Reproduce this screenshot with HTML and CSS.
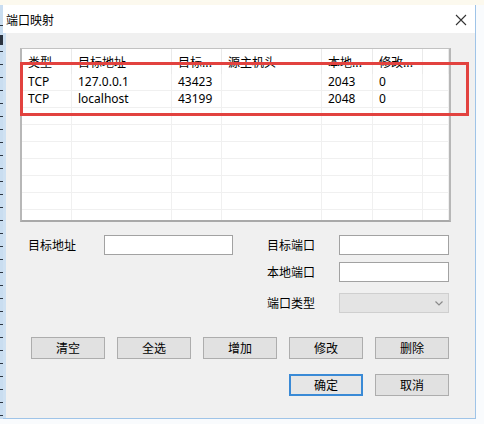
FILE: index.html
```html
<!DOCTYPE html>
<html lang="zh-CN">
<head>
<meta charset="utf-8">
<title>端口映射</title>
<link rel="stylesheet" href="styles.css">
</head>
<body>
<div class="desk">
  <div class="top-strip"></div>
  <div class="stage">
    <div class="edge"><span class="edge-mark"></span></div>
    <div class="win">
      <div class="titlebar">
        <span class="title">端口映射</span>
        <svg class="close" width="12" height="12" viewBox="0 0 12 12"><path d="M1 1L11 11M11 1L1 11" stroke="#333" stroke-width="1.1" fill="none"/></svg>
      </div>
      <div class="client">
        <div class="list">
          <div class="lv-row lv-head">
            <div class="cell">类型</div><div class="cell">目标地址</div><div class="cell">目标...</div><div class="cell">源主机头</div><div class="cell">本地...</div><div class="cell">修改...</div><div class="cell"></div>
          </div>
          <div class="lv-row">
            <div class="cell">TCP</div><div class="cell">127.0.0.1</div><div class="cell">43423</div><div class="cell"></div><div class="cell">2043</div><div class="cell">0</div><div class="cell"></div>
          </div>
          <div class="lv-row">
            <div class="cell">TCP</div><div class="cell">localhost</div><div class="cell">43199</div><div class="cell"></div><div class="cell">2048</div><div class="cell">0</div><div class="cell"></div>
          </div>
          <div class="lv-row"><div class="cell"></div><div class="cell"></div><div class="cell"></div><div class="cell"></div><div class="cell"></div><div class="cell"></div><div class="cell"></div></div>
          <div class="lv-row"><div class="cell"></div><div class="cell"></div><div class="cell"></div><div class="cell"></div><div class="cell"></div><div class="cell"></div><div class="cell"></div></div>
          <div class="lv-row"><div class="cell"></div><div class="cell"></div><div class="cell"></div><div class="cell"></div><div class="cell"></div><div class="cell"></div><div class="cell"></div></div>
          <div class="lv-row"><div class="cell"></div><div class="cell"></div><div class="cell"></div><div class="cell"></div><div class="cell"></div><div class="cell"></div><div class="cell"></div></div>
          <div class="lv-row"><div class="cell"></div><div class="cell"></div><div class="cell"></div><div class="cell"></div><div class="cell"></div><div class="cell"></div><div class="cell"></div></div>
          <div class="lv-row"><div class="cell"></div><div class="cell"></div><div class="cell"></div><div class="cell"></div><div class="cell"></div><div class="cell"></div><div class="cell"></div></div>
          <div class="lv-row"><div class="cell"></div><div class="cell"></div><div class="cell"></div><div class="cell"></div><div class="cell"></div><div class="cell"></div><div class="cell"></div></div>
        </div>
        <div class="form">
          <div class="lbl r1 c1">目标地址</div>
          <div class="input r1 c2"></div>
          <div class="lbl r1 c4">目标端口</div>
          <div class="input r1 c5"></div>
          <div class="lbl r2 c4">本地端口</div>
          <div class="input r2 c5"></div>
          <div class="lbl r3 c4">端口类型</div>
          <div class="select r3 c5">
            <svg class="chev" width="8" height="5" viewBox="0 0 8 5"><path d="M0.5 0.5L4 4L7.5 0.5" stroke="#8a8a8a" stroke-width="1.2" fill="none"/></svg>
          </div>
        </div>
        <div class="btns">
          <div class="btn">清空</div>
          <div class="btn">全选</div>
          <div class="btn">增加</div>
          <div class="btn">修改</div>
          <div class="btn">删除</div>
        </div>
        <div class="btns2">
          <div class="btn btn-default">确定</div>
          <div class="btn">取消</div>
        </div>
      </div>
    </div>
  </div>
  <div class="highlight"></div>
</div>
</body>
</html>
```
FILE: styles.css
```css
html, body {
  margin: 0;
  padding: 0;
}
body {
  font-family: "Noto Sans", "Noto Sans CJK SC", sans-serif;
  font-size: 12px;
  color: #000;
  background: #fff;
}
.desk {
  position: relative;
  width: 484px;
  height: 424px;
  overflow: hidden;
  background: #f9fbfd;
}
.top-strip {
  height: 5px;
  background: #fcf9ee;
}
.stage {
  display: flex;
  height: 414px;
}
.edge {
  position: relative;
  width: 3px;
  height: 414px;
  background-color: #c9ddf0;
  background-image: repeating-linear-gradient(to bottom, transparent 0, transparent 12px, #2b3440 12px, #2b3440 13px);
  background-position: 0 8px;
}
.edge-mark {
  position: absolute;
  left: 0;
  top: 30px;
  width: 3px;
  height: 10px;
  background: #2b3440;
}
.win {
  width: 472px;
  height: 413px;
  border-right: 1px solid #9fc4e8;
  border-bottom: 1px solid #9fc4e8;
  display: flex;
  flex-direction: column;
}
.titlebar {
  height: 28px;
  background: #fff;
  display: flex;
  align-items: center;
  justify-content: space-between;
  padding: 0 8px 0 3px;
}
.title {
  font-family: "Noto Sans CJK SC", sans-serif;
  font-size: 12px;
  line-height: 28px;
  padding-top: 1px;
}
.close {
  display: block;
  margin-top: 2px;
}
.client {
  flex: 1;
  background: #f0f0f0;
  border-left: 3px solid #cfe1f2;
}
.list {
  margin: 15px 0 0 14px;
  width: 427px;
  height: 171px;
  background: #fff;
  border-top: 1px solid #c2c2c2;
  border-left: 2px solid #b7b7b7;
  border-right: 2px solid #b7b7b7;
  border-bottom: 2px solid #a9a9a9;
  overflow: hidden;
}
.lv-row {
  display: grid;
  grid-template-columns: 50px 100px 50px 100px 51px 50px 1fr;
  height: 17px;
  box-sizing: border-box;
  border-bottom: 1px solid #f0f0f0;
}
.lv-head {
  height: 25px;
  border-bottom: none;
}
.cell {
  border-right: 1px solid #f0f0f0;
  padding-left: 6px;
  line-height: 16px;
  white-space: nowrap;
  overflow: hidden;
}
.lv-head .cell {
  line-height: 26px;
  border-right-color: #eaeaea;
  font-family: "Noto Sans CJK SC", sans-serif;
}
.form {
  margin-top: 13px;
  padding-left: 22px;
  display: grid;
  grid-template-columns: 76px 129px 34px 72px 110px;
  grid-template-rows: 27px 31px 20px;
}
.r1 { grid-row: 1; }
.r2 { grid-row: 2; }
.r3 { grid-row: 3; }
.c1 { grid-column: 1; }
.c2 { grid-column: 2; }
.c4 { grid-column: 4; }
.c5 { grid-column: 5; }
.lbl {
  height: 20px;
  line-height: 20px;
  font-family: "Noto Sans CJK SC", sans-serif;
  align-self: start;
}
.input {
  height: 20px;
  box-sizing: border-box;
  background: #fff;
  border: 1px solid #a2a2a2;
  align-self: start;
}
.select {
  height: 20px;
  box-sizing: border-box;
  background: #e4e4e4;
  border: 1px solid #cfcfcf;
  display: flex;
  align-items: center;
  justify-content: flex-end;
  padding-right: 5px;
  align-self: start;
}
.chev {
  display: block;
}
.btns {
  margin: 24px 0 0 25px;
  width: 418px;
  display: flex;
  justify-content: space-between;
}
.btns2 {
  margin: 15px 0 0 25px;
  width: 418px;
  display: flex;
  justify-content: flex-end;
  gap: 12px;
}
.btn {
  width: 74px;
  height: 22px;
  box-sizing: border-box;
  background: #e1e1e1;
  border: 1px solid #adadad;
  text-align: center;
  line-height: 20px;
  font-family: "Noto Sans CJK SC", sans-serif;
}
.btn-default {
  border: 2px solid #3a8ad6;
  line-height: 18px;
  background: #e6e6e6;
}
.highlight {
  position: absolute;
  left: 20px;
  top: 62px;
  width: 449px;
  height: 54px;
  box-sizing: border-box;
  border: 3px solid #e2423f;
}
```
